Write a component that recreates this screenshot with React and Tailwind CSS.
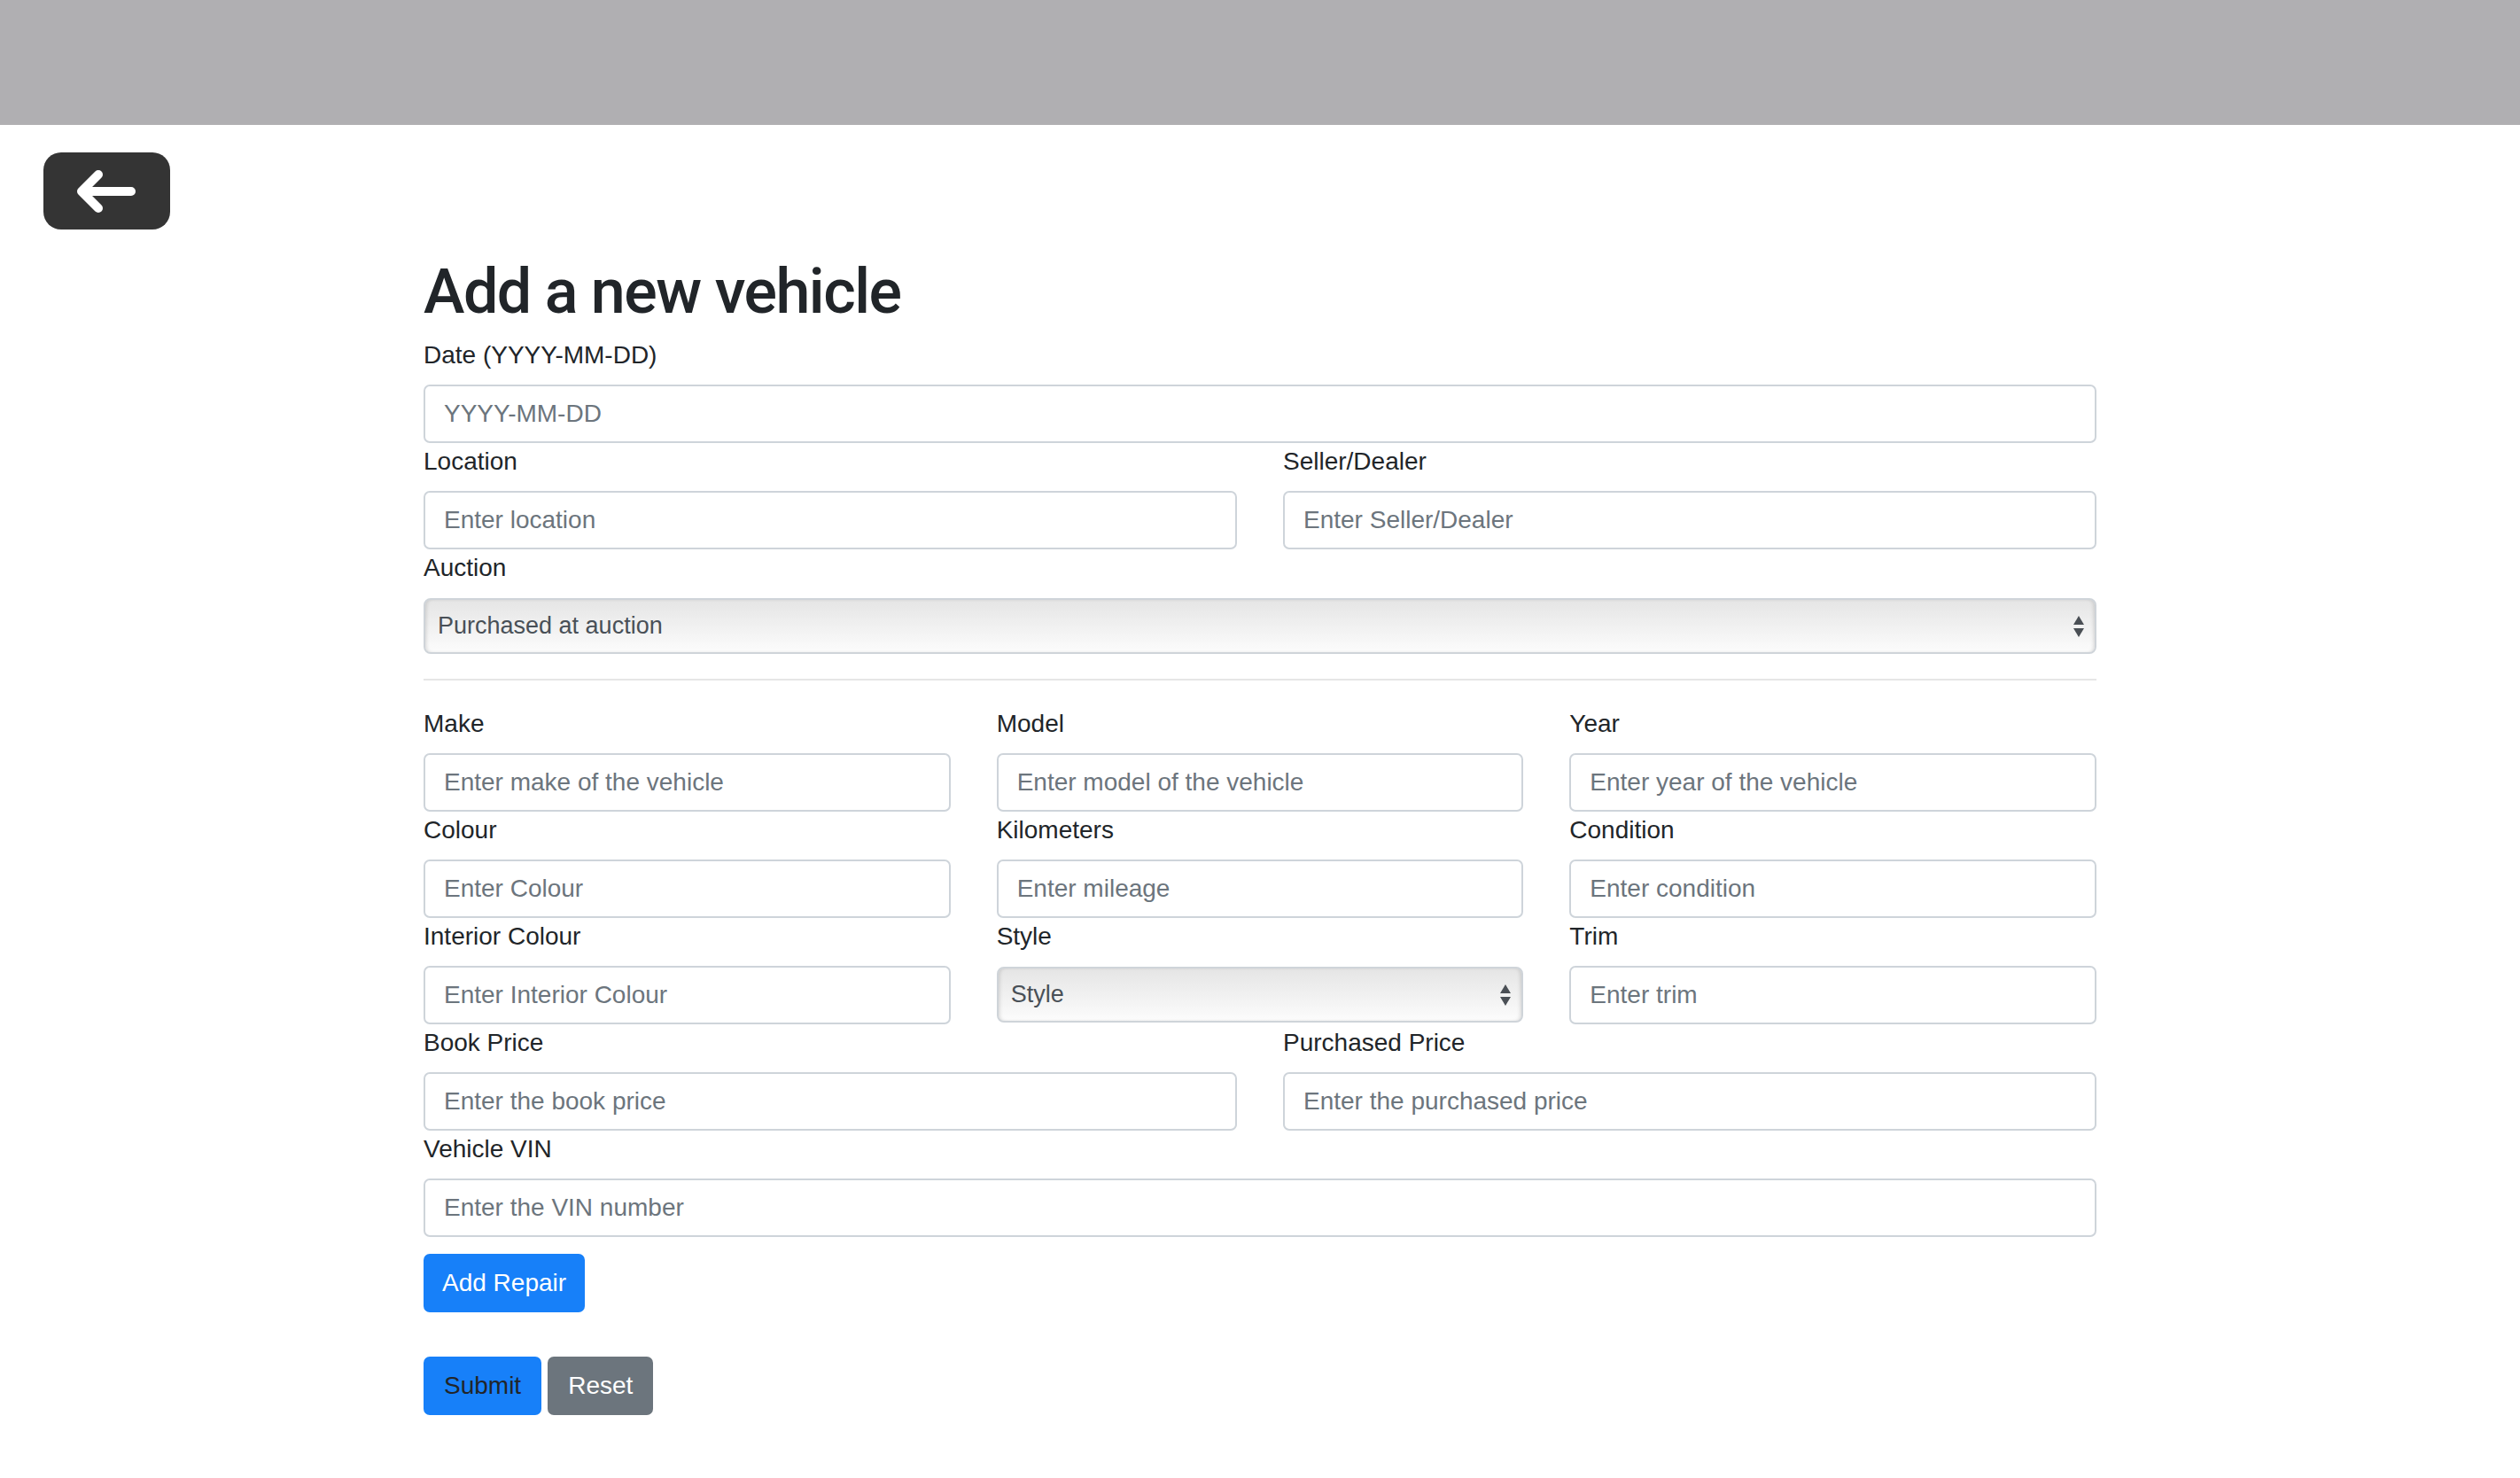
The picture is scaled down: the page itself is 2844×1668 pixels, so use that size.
import React from 'react';

const Field = ({ label, placeholder }) => (
  <div>
    <label className="block text-[28px] leading-[41px] mb-[13px]">{label}</label>
    <input
      type="text"
      placeholder={placeholder}
      className="block w-full h-[66px] border-2 border-[#ced4da] rounded-[7px] px-[21px] text-[28px] text-[#495057] placeholder:text-[#6c757d] outline-none bg-white"
    />
  </div>
);

const SelectField = ({ label, value }) => (
  <div>
    <label className="block text-[28px] leading-[41px] mb-[14px]">{label}</label>
    <div className="relative">
      <select className="block w-full h-[63px] appearance-none border-2 border-[#cfd4d9] rounded-[8px] pl-[14px] pr-[50px] text-[27px] text-[#495057] bg-gradient-to-b from-[#e5e5e5] to-[#fcfcfc] shadow-[inset_3px_0_4px_-2px_rgba(0,0,0,0.15),inset_-3px_0_4px_-2px_rgba(0,0,0,0.15)] outline-none">
        <option>{value}</option>
      </select>
      {/* native-looking up/down arrows */}
      <svg className="absolute right-[13px] top-1/2 -translate-y-1/2 pointer-events-none" width="14" height="26" viewBox="0 0 14 26">
        <path d="M7 1 L13 11 L1 11 Z" fill="#4a4f55" />
        <path d="M7 25 L13 15 L1 15 Z" fill="#4a4f55" />
      </svg>
    </div>
  </div>
);

const App = () => {
  return (
    <div className="min-h-screen bg-white font-['Liberation_Sans',Arial,sans-serif] text-[#212529]">
      <div className="h-[141px] bg-[#b0afb2]" />

      <div className="pl-[49px] pt-[31px]">
        <button className="w-[143px] h-[87px] rounded-[20px] bg-[#343434] flex items-center justify-center">
          <svg width="143" height="87" viewBox="0 0 143 87">
            <path d="M99 44 H43 M62 25 L43 44 L62 63" fill="none" stroke="#fff" strokeWidth="10" strokeLinecap="round" strokeLinejoin="round" />
          </svg>
        </button>
      </div>

      <div className="w-[1888px] mx-auto">
        <h1 className="mt-[28px] mb-[9px] font-['Roboto',sans-serif] font-medium text-[70px] leading-[84px] tracking-[-1.5px]">
          Add a new vehicle
        </h1>

        <form>
          <Field label="Date (YYYY-MM-DD)" placeholder="YYYY-MM-DD" />
          <div className="grid grid-cols-2 gap-x-[52px]">
            <Field label="Location" placeholder="Enter location" />
            <Field label="Seller/Dealer" placeholder="Enter Seller/Dealer" />
          </div>
          <SelectField label="Auction" value="Purchased at auction" />

          <hr className="mt-[28px] mb-[28px] border-0 border-t-2 border-[#e6e6e6]" />

          <div className="grid grid-cols-3 gap-x-[52px]">
            <Field label="Make" placeholder="Enter make of the vehicle" />
            <Field label="Model" placeholder="Enter model of the vehicle" />
            <Field label="Year" placeholder="Enter year of the vehicle" />
            <Field label="Colour" placeholder="Enter Colour" />
            <Field label="Kilometers" placeholder="Enter mileage" />
            <Field label="Condition" placeholder="Enter condition" />
            <Field label="Interior Colour" placeholder="Enter Interior Colour" />
            <SelectField label="Style" value="Style" />
            <Field label="Trim" placeholder="Enter trim" />
          </div>
          <div className="grid grid-cols-2 gap-x-[52px]">
            <Field label="Book Price" placeholder="Enter the book price" />
            <Field label="Purchased Price" placeholder="Enter the purchased price" />
          </div>
          <Field label="Vehicle VIN" placeholder="Enter the VIN number" />

          <button type="button" className="mt-[19px] h-[66px] px-[21px] rounded-[7px] bg-[#1780f9] text-white text-[28px]">
            Add Repair
          </button>

          <div className="mt-[50px] flex gap-[7px]">
            <button type="submit" className="h-[66px] px-[23px] rounded-[7px] bg-[#1780f9] text-[#212529] text-[28px]">
              Submit
            </button>
            <button type="reset" className="h-[66px] px-[23px] rounded-[7px] bg-[#6c757d] text-white text-[28px]">
              Reset
            </button>
          </div>
        </form>
      </div>
    </div>
  );
};

export default App;
